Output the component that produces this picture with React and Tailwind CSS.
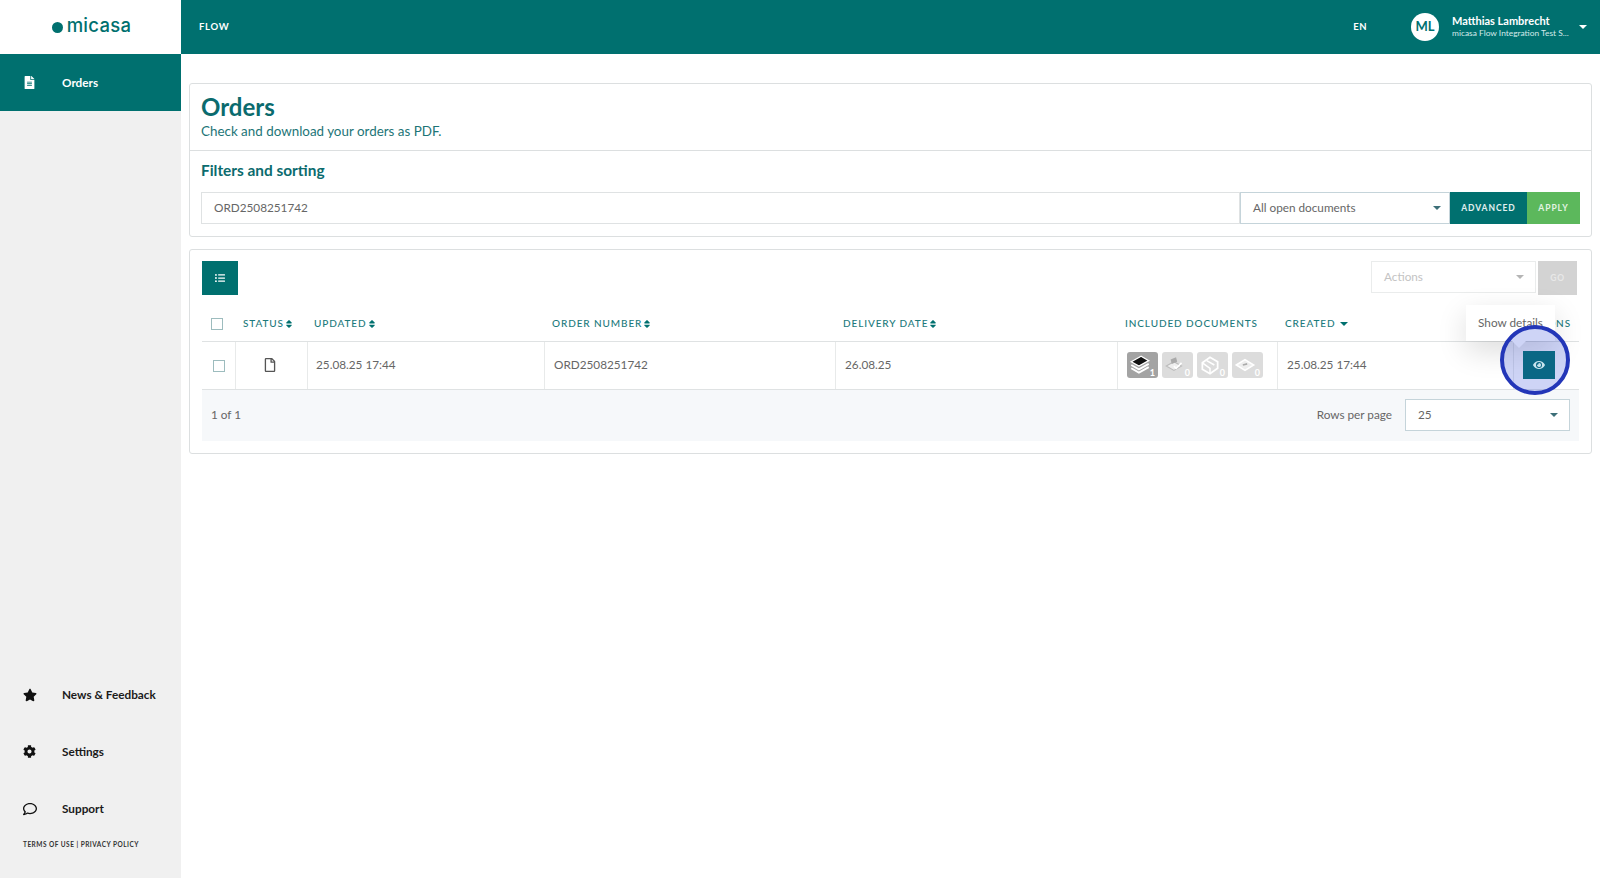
import React from "react";
import { FaFileAlt, FaRegFile, FaStar, FaCog, FaRegComment, FaListUl, FaEye, FaSort } from "react-icons/fa";

const Sort = () => <FaSort size={10} color="#00706f" className="ml-0" />;

const Caret = ({ color = "#00706f", className = "" }) => (
  <svg width="8" height="4" viewBox="0 0 8 4" className={className}>
    <path d="M0 0 H8 L4 4 Z" fill={color} />
  </svg>
);

const Th = ({ w, children, className = "" }) => (
  <div className={`flex items-center text-[10px] font-medium tracking-[0.9px] text-[#1c7a7c] ${w} ${className}`}>
    {children}
  </div>
);

const Td = ({ w, children, className = "" }) => (
  <div className={`flex items-center border-l border-[#e8eaea] pb-[1px] text-[11.75px] text-[#666] ${w} ${className}`}>
    {children}
  </div>
);

const Checkbox = ({ className = "" }) => (
  <div className={`h-3 w-3 border-[1.5px] border-[#9dbcbe] bg-white ${className}`} />
);

const DocBadge = ({ n, active, children }) => (
  <div className={`relative h-[26px] w-[31px] rounded-[3px] ${active ? "bg-[#a3a3a3]" : "bg-[#dcdcdc]"}`}>
    <svg width="24" height="24" viewBox="0 0 22 22" className="absolute left-[1px] top-[1px]">
      {children}
    </svg>
    <span className="absolute bottom-0 right-[3px] text-[9px] font-bold leading-[11px] text-white">{n}</span>
  </div>
);

const NavItem = ({ icon, label, active }) => (
  <div className={`flex h-[57px] items-center ${active ? "bg-[#00706f] text-white" : "text-[#1b1b1b]"}`}>
    <div className="flex w-[62px] justify-center pr-[3px]">{icon}</div>
    <span className="pt-[1px] text-[11.75px] font-bold">{label}</span>
  </div>
);

export default function App() {
  return (
    <div className="flex h-[878px] w-[1600px] overflow-hidden bg-white font-['Lato','Noto_Sans',sans-serif]">
      <aside className="flex w-[181px] shrink-0 flex-col bg-[#f0f0f0]">
        <div className="flex h-[54px] items-center justify-center gap-[4px] bg-white pl-[2px]">
          <span className="h-[11px] w-[11px] rounded-full bg-[#00706f]" />
          <span className="pb-[3px] font-['Inter',sans-serif] text-[18.5px] font-medium leading-none tracking-[0.3px] text-[#00706f]">micasa</span>
        </div>
        <NavItem active label="Orders" icon={<FaFileAlt size={13} color="#fff" />} />
        <div className="flex-1" />
        <NavItem label="News & Feedback" icon={<FaStar size={14} color="#111" />} />
        <NavItem label="Settings" icon={<FaCog size={13} color="#111" />} />
        <NavItem label="Support" icon={<FaRegComment size={14} color="#111" />} />
        <div className="pb-[28px] pl-[23px] pt-[3px] text-[6.5px] font-bold leading-[10px] tracking-[0.48px] text-[#333]">
          TERMS OF USE | PRIVACY POLICY
        </div>
      </aside>

      <div className="flex min-w-0 flex-1 flex-col">
        <header className="flex h-[54px] shrink-0 items-center bg-[#00706f] pl-[18px] text-white">
          <span className="text-[9.5px] font-bold tracking-[0.7px]">FLOW</span>
          <span className="ml-auto text-[9.5px] font-bold tracking-[0.5px]">EN</span>
          <div className="ml-[44px] flex h-[28px] w-[28px] items-center justify-center rounded-full bg-white text-[13px] font-bold text-[#00706f]">ML</div>
          <div className="ml-[13px] w-[122px] pb-[3px]">
            <div className="text-[11px] font-bold leading-[14px]">Matthias Lambrecht</div>
            <div className="truncate text-[8.4px] leading-[10px] text-[#d5eaea]">micasa Flow Integration Test S...</div>
          </div>
          <Caret color="#fff" className="ml-[5px] mr-[13px]" />
        </header>

        <main className="flex flex-col gap-3 pl-2 pr-2 pt-[29px]">
          <section className="rounded-[3px] border border-[#dcdfe0] bg-white">
            <div className="h-[67px] border-b border-[#dcdfe0] px-[11px] pt-[8px]">
              <h1 className="text-[24px] font-bold leading-[30px] text-[#0b6b6e]">Orders</h1>
              <p className="pt-[1px] text-[13.4px] leading-[16px] text-[#1d7577]">Check and download your orders as PDF.</p>
            </div>
            <div className="px-[11px] pb-3 pt-[10px]">
              <h2 className="text-[15.4px] font-bold leading-[19px] text-[#0b6b6e]">Filters and sorting</h2>
              <div className="mt-[12px] flex h-[32px]">
                <div className="flex flex-1 items-center border border-[#dfe2e3] pl-3 text-[11.75px] text-[#666]">ORD2508251742</div>
                <div className="flex w-[210px] items-center justify-between border border-l border-[#c5d4da] pl-3 pr-[8px] text-[11.75px] text-[#666]">
                  All open documents
                  <Caret color="#3c6f78" />
                </div>
                <div className="flex w-[77px] items-center justify-center bg-[#00706f] text-[8.5px] font-bold tracking-[0.95px] text-[#e3f1f1]">ADVANCED</div>
                <div className="flex w-[53px] items-center justify-center bg-[#5cb85c] text-[8.5px] font-bold tracking-[0.95px] text-[#e3f4e3]">APPLY</div>
              </div>
            </div>
          </section>

          <section className="relative rounded-[3px] border border-[#dcdfe0] bg-white px-3 pb-3 pt-[11px]">
            <div className="flex h-[34px] items-start justify-between">
              <div className="flex h-[34px] w-[36px] items-center justify-center bg-[#00706f]">
                <FaListUl size={10} color="#fff" />
              </div>
              <div className="mr-[2px] flex">
                <div className="flex h-[32px] w-[165px] items-center justify-between border border-[#eaecec] pl-3 pr-[11px] text-[11.75px] text-[#c3c3c3]">
                  Actions
                  <Caret color="#b5b5b5" />
                </div>
                <div className="ml-[2px] flex h-[34px] w-[39px] items-center justify-center bg-[#d3d3d3] text-[8.5px] font-bold tracking-[0.8px] text-[#e8e8e8]">GO</div>
              </div>
            </div>

            <div className="mt-[12px] flex h-[34px] pb-[1px]">
              <div className="flex w-[33px] items-center pl-[9px]"><Checkbox /></div>
              <Th w="w-[72px]" className="pl-2">STATUS<Sort /></Th>
              <Th w="w-[237px]" className="pl-[7px]">UPDATED<Sort /></Th>
              <Th w="w-[296px]" className="pl-2">ORDER NUMBER<Sort /></Th>
              <Th w="w-[277px]" className="pl-[3px]">DELIVERY DATE<Sort /></Th>
              <Th w="w-[160px]" className="pl-[8px]">INCLUDED DOCUMENTS</Th>
              <Th w="flex-1" className="pl-[8px]">
                CREATED
                <Caret className="ml-[5px]" />
                <span className="ml-auto pr-[8px]">ACTIONS</span>
              </Th>
            </div>

            <div className="flex h-[49px] border-b border-t border-[#dfe2e3]">
              <div className="flex w-[33px] items-center pl-[11px]"><Checkbox /></div>
              <Td w="w-[72px]" className="justify-center pr-[3px]"><FaRegFile size={14} color="#555" /></Td>
              <Td w="w-[237px]" className="pl-[8px]">25.08.25 17:44</Td>
              <Td w="w-[291px]" className="pl-[9px]">ORD2508251742</Td>
              <Td w="w-[282px]" className="pl-[9px]">26.08.25</Td>
              <Td w="w-[160px]" className="gap-[4px] pl-[9px]">
                <DocBadge n="1" active>
                  <path d="M3 8 L12 3 L19 7 L10 12 Z" fill="#111" stroke="#fff" strokeWidth="1.2" />
                  <path d="M3 11 L10 15 L19 10 M3 14 L10 18 L19 13" fill="none" stroke="#fff" strokeWidth="1.7" />
                </DocBadge>
                <DocBadge n="0">
                  <path d="M3 12 L10 8 L17 12 L10 16 Z" fill="#eee" stroke="#bbb" />
                  <path d="M7 6 L12 4 L13 8 L8 10 Z" fill="#aaa" />
                  <path d="M10 12 L12 14 L17 9" fill="none" stroke="#fff" strokeWidth="1.5" />
                </DocBadge>
                <DocBadge n="0">
                  <path d="M4 9 L11 4 L18 8 V14 L11 19 L4 15 Z" fill="none" stroke="#fff" strokeWidth="1.6" />
                  <path d="M4 9 L11 14 V19 M8 7 L15 11" fill="none" stroke="#fff" strokeWidth="1.4" />
                </DocBadge>
                <DocBadge n="0">
                  <path d="M3 11 L11 6 L19 11 L11 16 Z" fill="#eee" stroke="#fff" strokeWidth="1.4" />
                  <path d="M9 11 L13 10" stroke="#aaa" strokeWidth="1.5" />
                </DocBadge>
              </Td>
              <Td w="w-[236px]" className="pl-[9px]">25.08.25 17:44</Td>
              <Td w="flex-1" className="pl-[9px]">
                <div className="relative z-10 flex h-[28px] w-[32px] items-center justify-center bg-[#0a6785]">
                  <FaEye size={12} color="#c8e4ee" />
                </div>
              </Td>
            </div>

            <div className="flex h-[51px] items-center justify-between bg-[#f6f8fa] pb-[2px] pl-[9px] pr-[9px] text-[11.75px] text-[#666]">
              <span>1 of 1</span>
              <div className="flex items-center">
                <span>Rows per page</span>
                <div className="ml-[13px] flex h-[32px] w-[165px] items-center justify-between border border-[#c5d4da] bg-white pl-3 pr-[11px]">
                  25
                  <Caret color="#3c6f78" />
                </div>
              </div>
            </div>

            <div className="absolute left-[1276px] top-[55px] flex h-[36px] w-[89px] items-center justify-center bg-white text-[11.75px] text-[#666] shadow-[0_10px_30px_rgba(0,0,0,0.14)]">
              Show details
              <span className="absolute left-[46px] top-full h-0 w-0 border-x-[7px] border-t-[7px] border-x-transparent border-t-white" />
            </div>
            <div className="absolute left-[1310px] top-[75px] h-[70px] w-[70px] rounded-full border-4 border-[#2336b8] bg-[#3a52dc]/25" />
          </section>
        </main>
      </div>
    </div>
  );
}
